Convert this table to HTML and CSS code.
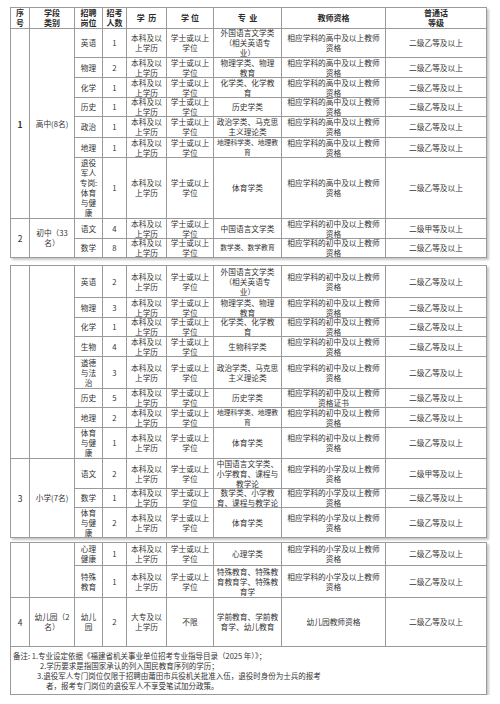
FILE: index.html
```html
<!DOCTYPE html>
<html lang="zh-CN">
<head>
<meta charset="utf-8">
<title>招聘岗位表</title>
<link rel="stylesheet" href="styles.css">
</head>
<body>
<div class="page">

<table class="block">
<colgroup><col class="c1"><col class="c2"><col class="c3"><col class="c4"><col class="c5"><col class="c6"><col class="c7"><col class="c8"><col class="c9"></colgroup>
<tr class="h21 head">
<td><span class="t">序<br>号</span></td><td><span class="t">学段<br>类别</span></td><td><span class="t">招聘<br>岗位</span></td><td><span class="t">招考<br>人数</span></td><td>学&nbsp;&nbsp;历</td><td>学&nbsp;位</td><td>专&nbsp;&nbsp;业</td><td>教师资格</td><td><span class="t">普通话<br>等级</span></td>
</tr>
<tr class="h29">
<td rowspan="7" class="num bold">1</td><td rowspan="7">高中(8名)</td>
<td>英语</td><td>1</td><td><span class="t">本科及以<br>上学历</span></td><td><span class="t">学士或以上<br>学位</span></td><td><span class="t">外国语言文学类<br>（相关英语专<br>业）</span></td><td><span class="t">相应学科的高中及以上教师<br>资格</span></td><td>二级乙等及以上</td>
</tr>
<tr class="h20">
<td>物理</td><td>2</td><td><span class="t">本科及以<br>上学历</span></td><td><span class="t">学士或以上<br>学位</span></td><td><span class="t">物理学类、物理<br>教育</span></td><td><span class="t">相应学科的高中及以上教师<br>资格</span></td><td>二级乙等及以上</td>
</tr>
<tr class="h20">
<td>化学</td><td>1</td><td><span class="t">本科及以<br>上学历</span></td><td><span class="t">学士或以上<br>学位</span></td><td><span class="t">化学类、化学教<br>育</span></td><td><span class="t">相应学科的高中及以上教师<br>资格</span></td><td>二级乙等及以上</td>
</tr>
<tr class="h19">
<td>历史</td><td>1</td><td><span class="t">本科及以<br>上学历</span></td><td><span class="t">学士或以上<br>学位</span></td><td>历史学类</td><td><span class="t">相应学科的高中及以上教师<br>资格</span></td><td>二级乙等及以上</td>
</tr>
<tr class="h21">
<td>政治</td><td>1</td><td><span class="t">本科及以<br>上学历</span></td><td><span class="t">学士或以上<br>学位</span></td><td><span class="t">政治学类、马克思<br>主义理论类</span></td><td><span class="t">相应学科的高中及以上教师<br>资格</span></td><td>二级乙等及以上</td>
</tr>
<tr class="h20">
<td>地理</td><td>1</td><td><span class="t">本科及以<br>上学历</span></td><td><span class="t">学士或以上<br>学位</span></td><td class="small"><span class="t">地理科学类、地理教<br>育</span></td><td><span class="t">相应学科的高中及以上教师<br>资格</span></td><td>二级乙等及以上</td>
</tr>
<tr class="h61">
<td><span class="t">退役<br>军人<br>专岗:<br>体育<br>与健<br>康</span></td><td>1</td><td><span class="t">本科及以<br>上学历</span></td><td><span class="t">学士或以上<br>学位</span></td><td>体育学类</td><td><span class="t">相应学科的高中及以上教师<br>资格</span></td><td>二级乙等及以上</td>
</tr>
<tr class="h20">
<td rowspan="2" class="num">2</td><td rowspan="2"><span class="t">初中（33<br>名）</span></td>
<td>语文</td><td>4</td><td><span class="t">本科及以<br>上学历</span></td><td><span class="t">学士或以上<br>学位</span></td><td>中国语言文学类</td><td><span class="t">相应学科的初中及以上教师<br>资格</span></td><td>二级甲等及以上</td>
</tr>
<tr class="h19">
<td>数学</td><td>8</td><td><span class="t">本科及以<br>上学历</span></td><td><span class="t">学士或以上<br>学位</span></td><td class="small">数学类、数学教育</td><td><span class="t">相应学科的初中及以上教师<br>资格</span></td><td>二级乙等及以上</td>
</tr>
</table>

<table class="block second">
<colgroup><col class="c1"><col class="c2"><col class="c3"><col class="c4"><col class="c5"><col class="c6"><col class="c7"><col class="c8"><col class="c9"></colgroup>
<tr class="h32">
<td rowspan="8"></td><td rowspan="8"></td>
<td>英语</td><td>2</td><td><span class="t">本科及以<br>上学历</span></td><td><span class="t">学士或以上<br>学位</span></td><td><span class="t">外国语言文学类<br>（相关英语专<br>业）</span></td><td><span class="t">相应学科的初中及以上教师<br>资格</span></td><td>二级乙等及以上</td>
</tr>
<tr class="h20">
<td>物理</td><td>3</td><td><span class="t">本科及以<br>上学历</span></td><td><span class="t">学士或以上<br>学位</span></td><td><span class="t">物理学类、物理<br>教育</span></td><td><span class="t">相应学科的初中及以上教师<br>资格</span></td><td>二级乙等及以上</td>
</tr>
<tr class="h19">
<td>化学</td><td>1</td><td><span class="t">本科及以<br>上学历</span></td><td><span class="t">学士或以上<br>学位</span></td><td><span class="t">化学类、化学教<br>育</span></td><td><span class="t">相应学科的初中及以上教师<br>资格</span></td><td>二级乙等及以上</td>
</tr>
<tr class="h20">
<td>生物</td><td>4</td><td><span class="t">本科及以<br>上学历</span></td><td><span class="t">学士或以上<br>学位</span></td><td>生物科学类</td><td><span class="t">相应学科的初中及以上教师<br>资格</span></td><td>二级乙等及以上</td>
</tr>
<tr class="h32">
<td><span class="t">道德<br>与法<br>治</span></td><td>3</td><td><span class="t">本科及以<br>上学历</span></td><td><span class="t">学士或以上<br>学位</span></td><td><span class="t">政治学类、马克思<br>主义理论类</span></td><td><span class="t">相应学科的初中及以上教师<br>资格</span></td><td>二级乙等及以上</td>
</tr>
<tr class="h19">
<td>历史</td><td>5</td><td><span class="t">本科及以<br>上学历</span></td><td><span class="t">学士或以上<br>学位</span></td><td>历史学类</td><td><span class="t">相应学科的初中及以上教师<br>资格证书</span></td><td>二级乙等及以上</td>
</tr>
<tr class="h20">
<td>地理</td><td>2</td><td><span class="t">本科及以<br>上学历</span></td><td><span class="t">学士或以上<br>学位</span></td><td class="small"><span class="t">地理科学类、地理教<br>育</span></td><td><span class="t">相应学科的初中及以上教师<br>资格</span></td><td>二级乙等及以上</td>
</tr>
<tr class="h31">
<td><span class="t">体育<br>与健<br>康</span></td><td>1</td><td><span class="t">本科及以<br>上学历</span></td><td><span class="t">学士或以上<br>学位</span></td><td>体育学类</td><td><span class="t">相应学科的初中及以上教师<br>资格</span></td><td>二级乙等及以上</td>
</tr>
<tr class="h30">
<td rowspan="3" class="num">3</td><td rowspan="3">小学(7名)</td>
<td>语文</td><td>2</td><td><span class="t">本科及以<br>上学历</span></td><td><span class="t">学士或以上<br>学位</span></td><td><span class="t">中国语言文学类、<br>小学教育、课程与<br>教学论</span></td><td><span class="t">相应学科的小学及以上教师<br>资格</span></td><td>二级甲等及以上</td>
</tr>
<tr class="h19">
<td>数学</td><td>1</td><td><span class="t">本科及以<br>上学历</span></td><td><span class="t">学士或以上<br>学位</span></td><td><span class="t">数学类、小学教<br>育、课程与教学论</span></td><td><span class="t">相应学科的小学及以上教师<br>资格</span></td><td>二级乙等及以上</td>
</tr>
<tr class="h30">
<td><span class="t">体育<br>与健<br>康</span></td><td>2</td><td><span class="t">本科及以<br>上学历</span></td><td><span class="t">学士或以上<br>学位</span></td><td>体育学类</td><td><span class="t">相应学科的小学及以上教师<br>资格</span></td><td>二级乙等及以上</td>
</tr>
</table>

<table class="block third">
<colgroup><col class="c1"><col class="c2"><col class="c3"><col class="c4"><col class="c5"><col class="c6"><col class="c7"><col class="c8"><col class="c9"></colgroup>
<tr class="h23">
<td rowspan="2"></td><td rowspan="2"></td>
<td><span class="t">心理<br>健康</span></td><td>1</td><td><span class="t">本科及以<br>上学历</span></td><td><span class="t">学士或以上<br>学位</span></td><td>心理学类</td><td><span class="t">相应学科的小学及以上教师<br>资格</span></td><td>二级乙等及以上</td>
</tr>
<tr class="h32">
<td><span class="t">特殊<br>教育</span></td><td>1</td><td><span class="t">本科及以<br>上学历</span></td><td><span class="t">学士或以上<br>学位</span></td><td><span class="t">特殊教育、特殊教<br>育教育学、特殊教<br>育学</span></td><td><span class="t">相应学科的小学及以上教师<br>资格</span></td><td>二级乙等及以上</td>
</tr>
<tr class="h49">
<td class="num">4</td><td><span class="t">幼儿园（2<br>名）</span></td><td><span class="t">幼儿<br>园</span></td><td>2</td><td><span class="t">大专及以<br>上学历</span></td><td>不限</td><td><span class="t">学前教育、学前教<br>育学、幼儿教育</span></td><td>幼儿园教师资格</td><td>二级乙等及以上</td>
</tr>
<tr class="h48">
<td colspan="9" class="note">
<div class="note-line">备注: 1.专业设定依据《福建省机关事业单位招考专业指导目录（2025 年）》；</div>
<div class="note-line ind2">2.学历要求是指国家承认的列入国民教育序列的学历；</div>
<div class="note-line ind3">3.退役军人专门岗位仅限于招聘由莆田市兵役机关批准入伍，退役时身份为士兵的报考</div>
<div class="note-line ind4">者，报考专门岗位的退役军人不享受笔试加分政策。</div>
</td>
</tr>
</table>

</div>
</body>
</html>
```

FILE: styles.css
```css
html, body {
  margin: 0;
  padding: 0;
  background: #ffffff;
}

.page {
  display: flex;
  flex-direction: column;
  align-items: flex-start;
  padding: 7px 0 0 10px;
  font-family: "Noto Sans CJK SC", "Noto Sans", sans-serif;
  color: #333333;
}

.block {
  width: 477px;
  table-layout: fixed;
  border-collapse: collapse;
  border: 1px solid #b5b5b5;
  box-shadow: 2px 2px 2px rgba(0, 0, 0, 0.22);
  background: #ffffff;
}

.second { margin-top: 7px; }
.third { margin-top: 4px; }

.c1 { width: 19px; }
.c2 { width: 45px; }
.c3 { width: 28px; }
.c4 { width: 24px; }
.c5 { width: 40px; }
.c6 { width: 47px; }
.c7 { width: 68px; }
.c8 { width: 104px; }
.c9 { width: 101px; }

.block td {
  border: 1px solid #9a9a9a;
  padding: 0 1px;
  text-align: center;
  vertical-align: middle;
  font-size: 7.7px;
  line-height: 10px;
  white-space: nowrap;
}

.t {
  display: block;
  margin: -1px 0;
}

.head td {
  font-weight: 700;
  font-size: 8px;
  line-height: 10.4px;
  color: #2a2a2a;
}

.h19 td { height: 18px; }
.h20 td { height: 19px; }
.h21 td { height: 20px; }
.h23 td { height: 22px; }
.h29 td { height: 28px; }
.h30 td { height: 29px; }
.h31 td { height: 30px; }
.h32 td { height: 31px; }
.h48 td { height: 47px; }
.h49 td { height: 48px; }
.h61 td { height: 60px; }

.block td.num {
  font-size: 8.5px;
}

.block td.bold {
  font-weight: 700;
}

.block td.small {
  font-size: 6.8px;
  line-height: 9.2px;
}

.block td.note {
  text-align: left;
  padding: 0 0 0 2px;
  font-size: 7.5px;
  line-height: 10px;
}

.note-line {
  white-space: nowrap;
}

.ind2 { padding-left: 27px; }
.ind3 { padding-left: 24px; }
.ind4 { padding-left: 33px; }
```
